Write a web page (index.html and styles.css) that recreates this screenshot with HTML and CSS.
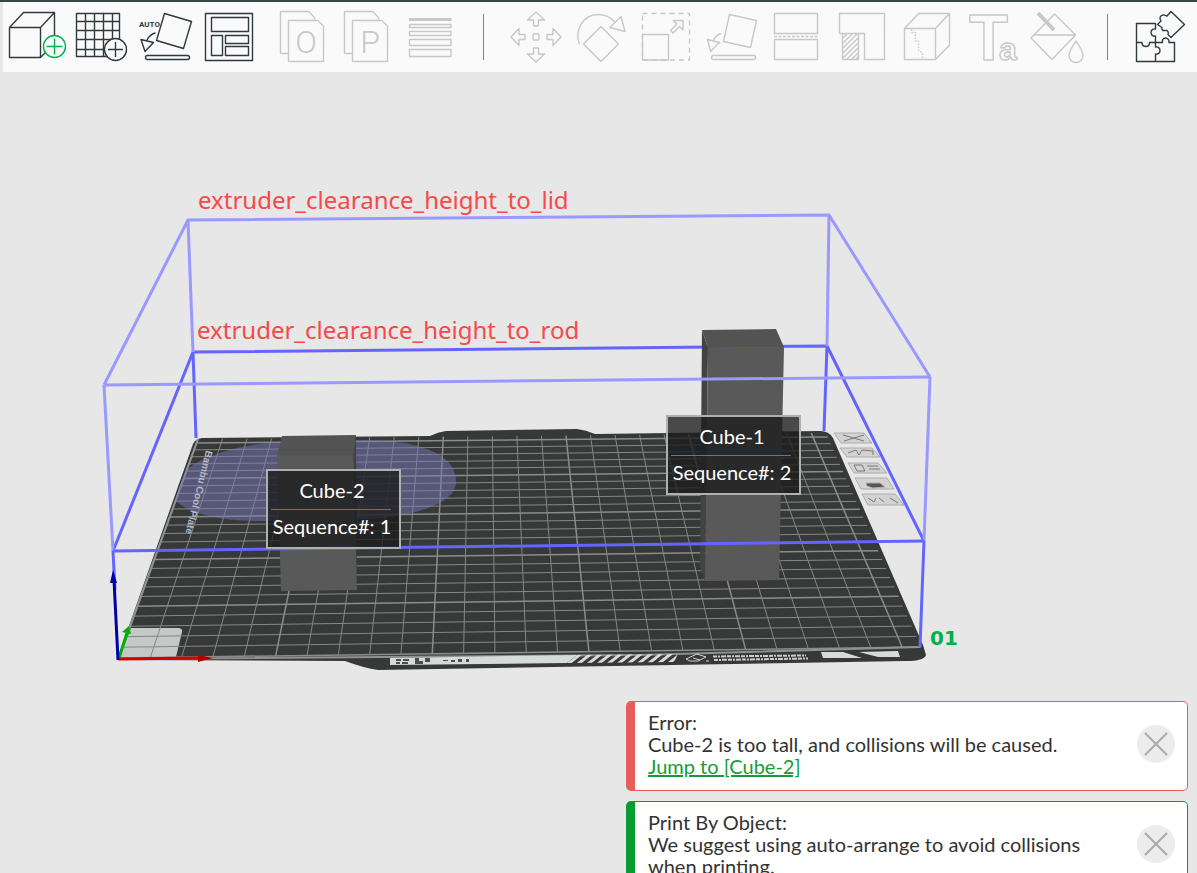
FILE: index.html
```html
<!DOCTYPE html>
<html lang="en">
<head>
  <meta charset="UTF-8" />
  <meta name="viewport" content="width=device-width, initial-scale=1.0" />
  <title>Print by Object</title>
  <link rel="stylesheet" href="styles.css">
</head>
<body>
  <header class="toolbar">
    <button class="tool" aria-label="Add object">
      <svg viewBox="0 0 65 66">
        <path d="M6.500 23.500H37.500V53.500H6.500ZL20.500 8.500H51.500V31M37.500 23.500 51.500 8.500M37.500 53.500 42 49" />
        <g class="accent"><circle cx="51.500" cy="42.500" r="11" /><path d="M51.500 34.500v16M43.500 42.500h16" /></g>
      </svg>
    </button>
    <button class="tool" aria-label="Add plate">
      <svg viewBox="0 0 65 66">
        <path d="M8.500 9.500H51.500V52.500H8.500ZM17.500 9.500v43M26.500 9.500v43M35.500 9.500v43M44.500 9.500v43M8.500 17.500h43M8.500 26.500h43M8.500 35.500h43M8.500 45.500h43" />
        <circle class="knob" cx="47.500" cy="45.500" r="11" />
        <path d="M47.500 38v15M40 45.500h15" />
      </svg>
    </button>
    <button class="tool" aria-label="Auto orient">
      <svg viewBox="0 0 65 66">
        <text class="auto" x="6" y="23">AUTO</text>
        <path d="M31.500 9.500 58.500 17.500 50.500 44.500 23.500 36.500ZM8 35.500 20.500 38.500 12 47.500ZM14 36Q17 30 22.500 29" />
        <rect x="12.500" y="51.500" width="44" height="4" rx="2" />
      </svg>
    </button>
    <button class="tool" aria-label="Arrange all objects">
      <svg viewBox="0 0 65 66">
        <path d="M7.500 9.500h47v47h-47zM13.500 13.500h37v14h-37zM13.500 31.500h11v20h-11zM27.500 31.500h23v8h-23zM27.500 42.500h23v9h-23z" />
      </svg>
    </button>

    <button class="tool tool-gap" aria-label="Split to objects" disabled>
      <svg viewBox="0 0 65 66">
        <path d="M45.500 16V13.500L39.500 7.500H11.500V49.500H19.500M19.500 16.500H49L54.500 22V57.500H19.500Z" />
        <text class="glyph" x="37" y="49">O</text>
      </svg>
    </button>
    <button class="tool" aria-label="Split to parts" disabled>
      <svg viewBox="0 0 65 66">
        <path d="M44.500 16V13.500L38.500 7.500H10.500V49.500H18.500M18.500 16.500H48L53.500 22V57.500H18.500Z" />
        <text class="glyph" x="36" y="49">P</text>
      </svg>
    </button>
    <button class="tool" aria-label="Variable layer height" disabled>
      <svg viewBox="0 0 65 66">
        <path class="solid" d="M10 14h42.500v3H10z" />
        <path d="M10.500 20.500h41.500v3H10.500zM10.500 27.500h41.500v4H10.500zM10.500 35.500h41.500v6H10.500zM10.500 45.500h41.500v7H10.500z" />
      </svg>
    </button>
    <span class="divider"></span>
    <button class="tool" aria-label="Move" disabled>
      <svg viewBox="0 0 65 66">
        <g transform="translate(33 33)">
          <path id="arrow" d="M0-25 8.500-17H2.500V-11H-2.500V-17H-8.500Z" />
          <use href="#arrow" transform="rotate(90)" />
          <use href="#arrow" transform="rotate(180)" />
          <use href="#arrow" transform="rotate(270)" />
          <rect x="-3" y="-3" width="6" height="6" rx="1" />
        </g>
      </svg>
    </button>
    <button class="tool" aria-label="Rotate" disabled>
      <svg viewBox="0 0 65 66">
        <path d="M33 22.500 50.500 40 33 57.500 15.500 40ZM11.500 40.500C6 27 15 10.500 30 10.500Q40 10.500 47 18M53 12.500 57 27.500 42 23.500Z" />
      </svg>
    </button>
    <button class="tool" aria-label="Scale" disabled>
      <svg viewBox="0 0 65 66">
        <path stroke-dasharray="5 4" d="M9.500 9.500H56.500V56H9.500Z" />
        <path d="M9.500 30.500h26v25.500h-26zM50 16.500H40.500L44 20 37.500 26.500 40 29 46.500 22.500 50 26Z" />
      </svg>
    </button>
    <button class="tool" aria-label="Lay on face" disabled>
      <svg viewBox="0 0 65 66">
        <path d="M31.500 10.500 58.500 16.500 52.500 43.500 25.500 37.500ZM9.500 35.500 21.500 38.500 12.500 47.500ZM15.500 36Q18 31 23 29.500" />
        <rect x="13.500" y="51.500" width="44" height="4" rx="2" />
      </svg>
    </button>
    <button class="tool" aria-label="Cut" disabled>
      <svg viewBox="0 0 65 66">
        <path d="M11.500 9.500h43v20h-43zM11.500 35.500h43v20h-43z" />
        <path stroke-dasharray="3 1.500" d="M11 32.500h44" />
      </svg>
    </button>
    <button class="tool" aria-label="Support painting" disabled>
      <svg viewBox="0 0 65 66">
        <path d="M11.500 9.500H56.500V55.500H36.500V29.500H11.500ZM14.500 29.500V55.500H30.500V29.500M14.500 34.500l5-5M14.500 39.500l10-10M14.500 44.500l15-15M14.500 49.500l16-16M14.500 54.500l16-16M18.500 55.500l12-12M23.500 55.500l7-7M27.500 55.500l3-3" />
      </svg>
    </button>
    <button class="tool" aria-label="Seam painting" disabled>
      <svg viewBox="0 0 65 66">
        <path d="M11.500 24.500H42.500V55.500H11.500ZL25.500 9.500H56.500V41L42.500 55.500M42.500 24.500 56.500 9.500" />
        <path stroke-dasharray="1.500 1.500" d="M18.500 25.500V28.500H22.500V37H25.500V46L29.500 49V55.500" />
      </svg>
    </button>
    <button class="tool" aria-label="Text shape" disabled>
      <svg viewBox="0 0 65 66">
        <text class="outline" x="11" y="56">T<tspan class="small" dx="-9">a</tspan></text>
      </svg>
    </button>
    <button class="tool" aria-label="Color painting" disabled>
      <svg viewBox="0 0 65 66">
        <path d="M31.500 10 52.500 31 29 55.500 8 34ZM11 31H52.500M53 37C57 43 60 47 60 51.500A7 7 0 0 1 46 51.500C46 47 49 43 53 37Z" />
        <path stroke-width="4" d="M15 9 31 26" />
      </svg>
    </button>
    <span class="divider"></span>
    <button class="tool" aria-label="Assembly view">
      <svg viewBox="0 0 65 66">
        <path d="M28.500 38.500V32C26 32.500 24 31 24 28.500S26 24.500 28.500 25V19.500H9.500V57.500H47.500V38.500H42C42.500 36 41 34 38.500 34S35 36 35.500 38.500H28.500V43C31 42.500 33 44 33 46.500S31 50.500 28.500 50V57.500M9.500 38.500H15C15 41 16.500 42.500 19 42.500S22.500 41 22.500 38.500H28.500" />
        <path d="M44 7.500 57.500 20.500 44 33.500 41 30.500C42 28 40.500 26 38 26.500 35.500 27 34.500 25.500 35 23.500L30.500 20.500 34 17C32 14.500 33 11.500 36 11 38 10.500 39 12 40 12Z" />
      </svg>
    </button>
  </header>

  <main class="stage">
    <svg class="scene" viewBox="0 72 1197 801" role="img" aria-label="Print plate with two cubes">
      <defs>
        <clipPath id="bed-clip"><path d="M118 659 197 439 826 433 922 647Z" /></clipPath>
        <clipPath id="hatch-clip"><path d="M577 655 678 654 674 662 567 663Z" /></clipPath>
      </defs>

      <!-- build plate -->
      <path class="bed" d="M117 660 193 444Q195 439 202 438L430 436Q438 432 446 431L577 429Q586 430 595 434L820 431Q829 431 833 438L923 645 926 655Q924 661 906 661L378 670Q364 668 345 661Z" />
      <path class="origin" d="M119 658 131 628 179 628Q183 629 182 632L176 657Z" />
      <g id="grid" class="grid"></g>
      <path class="edge" d="M118 659 198 439M118 659 640 655 920 647" />
      <path class="clearance" clip-path="url(#bed-clip)" d="M172 494C176 508 205 521 262 521L370 519C425 515 456 500 456 482 456 458 430 441 365 440L290 441C230 444 175 462 172 494Z" />
      <text class="bed-name" transform="translate(206 450) rotate(104)">Bambu Cool Plate</text>

      <!-- front lip -->
      <path class="print" d="M390 658 577 655 567 663 390 665Z" />
      <path class="ink" d="M396 659h5v2h-5zM403 659h6v2h-6zM396 662h4v2h-4zM402 662h6v2h-6zM415 658h4v6h-4zM419 661h4v3h-4zM425 658h5v4h-5zM443 660h5v1h-5zM451 660h4v2h-4zM458 659h4v3h-4zM466 659h3v3h-3z" />
      <path class="stripes" clip-path="url(#hatch-clip)" d="M568 664l14-11M578 664l14-11M588 664l14-11M598 664l14-11M608 664l14-11M618 664l14-11M628 664l14-11M638 664l14-11M648 664l14-11M658 664l14-11M668 664l14-11" />
      <path class="mark" d="M686 659 697 654 706 657 698 661 690 661ZM693 658 700 660M706 661h3" />
      <path class="microprint" d="M713 656.500 806 655.500M714 660 808 658.500" />
      <path class="print" d="M821 652H843L862 658H823ZM859 652 898 651 900 657H878Z" />

      <!-- plate actions -->
      <g class="actions">
        <path d="M834 433h30l8 10h-31zM840 448h32l8 9h-33zM848 463h30l9 10h-33zM855 478h32l7 11h-33zM862 494h33l9 11h-36z" />
        <path class="strong" d="M843 435 864 441M864 435 844 441M848 453 856 450 859 455 862 450 873 451 873 455M854 465h8l3 6h-8zM867 466h11M869 469h11M868 498l6 4 2-4M879 498l5 4M890 498l8 5" />
        <path class="lock" d="M866 483h14l5 4-12 1-6-2z" />
      </g>
      <text class="plate-no" x="930" y="645">01</text>

      <!-- limits behind the models -->
      <g class="rod"><path d="M113 551 193 352 827 346 924 541M193 352 196 438M827 346 824 431M924 541 920 647M113 551 115 590" /></g>
      <g class="lid"><path d="M104 385 188 220 829 215 930 377M188 220 193 352M829 215 827 346M930 377 924 541M104 385 113 551" /></g>

      <!-- models -->
      <path class="side" d="M702 330 708 348 705 581 700 566ZM353 455 356 435 357 590Z" />
      <path class="top" d="M702 330 776 329 784 347 708 348ZM282 436 356 435 353 456 277 456Z" />
      <path class="front" d="M708 348 784 347 779 580 705 581ZM277 455 353 455 357 590 281 591Z" />

      <path class="lid" d="M104 385 930 377" />
      <path class="rod" d="M113 551 924 541" />

      <!-- axes -->
      <path class="axis-y" d="M119 658 127 633" /><path class="cone-y" d="M122 632 129 626 131 634Z" />
      <path class="axis-x" d="M118 659 200 658" /><path class="cone-x" d="M198 655 213 658 198 662Z" />
      <path class="axis-z" d="M118 660 114 580" /><path class="cone-z" d="M113 570 117 583H110Z" />

      <text class="note" x="198" y="209">extruder_clearance_height_to_lid</text>
      <text class="note" x="197" y="339">extruder_clearance_height_to_rod</text>

      <g class="tag" transform="translate(667 416)">
        <rect width="133" height="78" />
        <path d="M4 39.500H124" />
        <text x="65" y="28">Cube-1</text>
        <text x="65" y="64">Sequence#: 2</text>
      </g>
      <g class="tag" transform="translate(267 470)">
        <rect width="133" height="78" />
        <path d="M4 39.500H124" />
        <text x="65" y="28">Cube-2</text>
        <text x="65" y="64">Sequence#: 1</text>
      </g>
    </svg>

    <section class="notices" aria-label="Notifications">
      <article class="notice error">
        <div class="notice-text">
          <p>Error:</p>
          <p>Cube-2 is too tall, and collisions will be caused.</p>
          <a href="#cube-2">Jump to [Cube-2]</a>
        </div>
        <button class="close" aria-label="Close error"><svg viewBox="0 0 38 38"><path d="M8 8 30 30M30 8 8 30" /></svg></button>
      </article>
      <article class="notice info">
        <div class="notice-text">
          <p>Print By Object:</p>
          <p>We suggest using auto-arrange to avoid collisions when printing.</p>
        </div>
        <button class="close" aria-label="Close tip"><svg viewBox="0 0 38 38"><path d="M8 8 30 30M30 8 8 30" /></svg></button>
      </article>
    </section>
  </main>

  <script>
    // The bed is 256mm wide with a line every 10mm and a bold one every 50mm
    const SIZE = 25.6;
    const near = [[119, 658], [921, 647]];
    const far = [[198, 439], [826, 433]];
    const DEPTH = 1.277;

    function mix(a, b, t) {
      return [a[0] + (b[0] - a[0]) * t, a[1] + (b[1] - a[1]) * t];
    }

    function project(x, y) {
      const t = y / SIZE;
      const s = (t * DEPTH) / (1 - t + t * DEPTH);
      return mix(mix(near[0], near[1], x / SIZE), mix(far[0], far[1], x / SIZE), s);
    }

    function addLine(a, b, bold) {
      const line = document.createElementNS('http://www.w3.org/2000/svg', 'path');
      line.setAttribute('d', 'M' + a.join(' ') + 'L' + b.join(' '));
      if (bold) line.setAttribute('class', 'bold');
      document.getElementById('grid').appendChild(line);
    }

    for (let i = 0; i <= 25; i++) {
      addLine(project(i, 0), project(i, SIZE), i % 5 === 0);
      addLine(project(0, i), project(SIZE, i), i % 5 === 0);
    }
  </script>
</body>
</html>
```
FILE: styles.css
```css
* {
  box-sizing: border-box;
  margin: 0;
  padding: 0;
}

body {
  display: flex;
  flex-direction: column;
  min-height: 100vh;
  background: #e7e7e7;
  border-top: 2px solid #3a4646;
  font-family: Lato, "Noto Sans", sans-serif;
  overflow: hidden;
}

.toolbar {
  display: flex;
  align-items: center;
  height: 70px;
  margin-left: 3px;
  background: #fafafa;
}

.tool {
  flex: 0 0 65px;
  height: 66px;
  border: none;
  background: none;
  color: #2f3a3c;
  cursor: pointer;
}

.tool:disabled {
  color: #c8c8c8;
  cursor: default;
}

.tool-gap {
  margin-left: 6px;
}

.tool svg {
  display: block;
  width: 65px;
  height: 66px;
  overflow: visible;
  fill: none;
  stroke: currentColor;
  stroke-width: 1.4;
  stroke-linejoin: round;
}

.tool .accent {
  stroke: #00b048;
}

.tool .accent circle,
.tool .knob {
  fill: #fafafa;
}

.tool .solid {
  fill: currentColor;
  stroke: none;
}

.tool .auto {
  font-family: Roboto, sans-serif;
  font-size: 8px;
  font-weight: bold;
  fill: currentColor;
  stroke: none;
}

.tool .glyph {
  font-family: Roboto, sans-serif;
  font-size: 32px;
  font-weight: 300;
  text-anchor: middle;
  fill: currentColor;
  stroke: none;
}

.tool .outline {
  font-family: "Liberation Sans", sans-serif;
  font-size: 64px;
  font-weight: bold;
}

.tool .small {
  font-size: 32px;
}

.divider {
  flex: 0 0 1px;
  height: 46px;
  margin: 0 19px;
  background: #7b8383;
}

.stage {
  position: relative;
  flex: 1;
}

.scene {
  display: block;
  width: 100%;
}

.bed {
  fill: #373938;
}

.origin {
  fill: #c4c8c6;
}

.grid {
  stroke: #858886;
  stroke-width: 1;
}

.grid .bold {
  stroke: #8a8d8b;
  stroke-width: 1.5;
}

.edge {
  fill: none;
  stroke: #8f9290;
  stroke-width: 2;
}

.clearance {
  fill: #7878b8;
  fill-opacity: 0.5;
}

.bed-name {
  font: bold 10px "Liberation Sans", sans-serif;
  fill: #b9bac6;
}

.print {
  fill: #d6dad8;
}

.ink {
  fill: #4b4e4c;
}

.stripes {
  stroke: #d6dad8;
  stroke-width: 3;
}

.mark {
  fill: none;
  stroke: #d0d3d1;
}

.microprint {
  fill: none;
  stroke: #c9cccb;
  stroke-width: 2;
  stroke-dasharray: 4 1 2 1 5 1;
}

.actions {
  fill: #d2d2d2;
  stroke: #adadad;
}

.actions .strong {
  fill: none;
  stroke: #777;
}

.actions .lock {
  fill: #555;
}

.plate-no {
  font: bold 20px "DejaVu Sans", sans-serif;
  fill: #00b048;
}

.rod,
.lid {
  fill: none;
  stroke-width: 3;
  stroke-linejoin: round;
}

.rod {
  stroke: #6464ff;
}

.lid {
  stroke: #9999ff;
}

.front {
  fill: #595959;
}

.top {
  fill: #535353;
}

.side {
  fill: #434343;
}

.axis-x,
.axis-y,
.axis-z {
  stroke-width: 3;
}

.axis-x {
  stroke: #d40000;
}

.axis-y {
  stroke: #00ae00;
}

.axis-z {
  stroke: #0000a8;
}

.cone-x {
  fill: #b00000;
}

.cone-y {
  fill: #00ae00;
}

.cone-z {
  fill: #0000a8;
}

.note {
  font: 24px "Noto Sans", sans-serif;
  fill: #f84848;
}

.tag rect {
  fill: #1c1c1e;
  fill-opacity: 0.78;
  stroke: #b0b0b0;
  stroke-width: 2;
}

.tag path {
  stroke: #1e88e5;
}

.tag text {
  font-size: 20px;
  fill: #fff;
  text-anchor: middle;
}

.notices {
  position: absolute;
  right: 9px;
  bottom: 0;
  display: flex;
  flex-direction: column;
  gap: 10px;
  width: 562px;
  max-width: 100%;
  height: 172px;
  overflow: hidden;
}

.notice {
  flex: none;
  display: flex;
  justify-content: space-between;
  gap: 30px;
  padding: 9px 12px 13px 13px;
  border: 1px solid;
  border-left-width: 9px;
  border-radius: 5px;
  background: #fff;
}

.error {
  border-color: #e85c5c;
}

.info {
  border-color: #089c30;
}

.notice-text {
  color: #333;
  font-size: 20px;
  line-height: 22px;
}

.notice-text a {
  color: #169c36;
}

.close {
  flex: 0 0 38px;
  height: 38px;
  margin-top: 14px;
  border: none;
  border-radius: 50%;
  background: #ececec;
  cursor: pointer;
}

.close svg {
  display: block;
  stroke: #a9a9a9;
  stroke-width: 2;
}
```
